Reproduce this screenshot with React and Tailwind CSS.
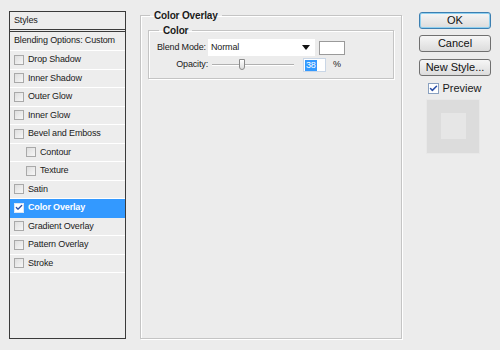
import { Check } from "lucide-react";

const font = { fontFamily: "'Liberation Sans', Arial, sans-serif" };

function Box({ checked, white }) {
  return (
    <span
      className={
        "flex h-[10px] w-[10px] shrink-0 items-center justify-center border " +
        (white ? "border-[#dbe6f5] bg-white" : "border-[#a9a9a9] bg-gradient-to-br from-[#dedede] to-[#f7f7f7]")
      }
    >
      {checked && <Check size={9} strokeWidth={4} className="text-[#2a4fa8]" />}
    </span>
  );
}

const items = [
  { label: "Drop Shadow" },
  { label: "Inner Shadow" },
  { label: "Outer Glow" },
  { label: "Inner Glow" },
  { label: "Bevel and Emboss" },
  { label: "Contour", sub: true },
  { label: "Texture", sub: true },
  { label: "Satin" },
  { label: "Color Overlay", active: true },
  { label: "Gradient Overlay" },
  { label: "Pattern Overlay" },
  { label: "Stroke" },
];

function Btn({ children, main }) {
  return (
    <button
      className={
        "h-[17px] w-[72px] rounded-[3px] border text-[11px] leading-none tracking-normal text-[#111] bg-gradient-to-b from-[#f6f6f6] to-[#dcdcdc] " +
        (main ? "border-[#3c7fb1] shadow-[inset_0_0_0_1px_#8fd0f0]" : "border-[#707070]")
      }
    >
      {children}
    </button>
  );
}

export default function App() {
  return (
    <div
      className="flex h-[350px] w-[500px] whitespace-nowrap bg-[#ececec] text-[9px] tracking-[-0.15px] text-[#1a1a1a]"
      style={font}
    >
      {/* Styles list */}
      <div className="ml-[9px] mt-[11px] flex h-[328px] w-[117px] flex-col border border-[#3a3a3a] bg-[#ededed]">
        <div className="flex h-[20px] items-center border-b-[3px] border-double border-[#3a3a3a] pl-[4px]">Styles</div>
        <div className="flex h-[19px] items-center border-b border-white pl-[4px]">Blending Options: Custom</div>
        {items.map((it) => (
          <div
            key={it.label}
            className={
              "flex h-[18.5px] items-center gap-[4px] border-b " +
              (it.sub ? "pl-[16px] " : "pl-[4px] ") +
              (it.active ? "border-[#3399ff] bg-[#3399ff] font-bold text-white" : "border-white")
            }
          >
            <Box checked={it.active} white={it.active} />
            <span>{it.label}</span>
          </div>
        ))}
      </div>

      {/* Main group */}
      <fieldset className="ml-[14px] mt-[8px] h-[331px] w-[262px] border border-[#c4c4c4] px-[7px] shadow-[inset_1px_1px_0_#fff,1px_1px_0_#fff]">
        <legend className="ml-[2px] px-[4px] text-[10px] font-bold">Color Overlay</legend>
        <fieldset className="mt-0 h-[56px] border border-[#c4c4c4] pl-[8px] shadow-[inset_1px_1px_0_#fff,1px_1px_0_#fff]">
          <legend className="ml-[2px] px-[4px] text-[10px] font-bold">Color</legend>
          <div className="mt-[1px] flex items-center">
            <span className="w-[51px]">Blend Mode:</span>
            <div className="flex h-[17px] w-[107px] items-center justify-between bg-white pl-[3px] pr-[5px]">
              <span>Normal</span>
              <span className="h-0 w-0 border-x-[4px] border-t-[5px] border-x-transparent border-t-[#111]" />
            </div>
            <div className="ml-[4px] h-[14px] w-[26px] border border-[#9a9a9a] bg-white" />
          </div>
          <div className="mt-[2px] flex items-center">
            <span className="w-[55px] pr-[4px] text-right">Opacity:</span>
            <div className="relative flex h-[14px] w-[82px] items-center">
              <div className="h-[2px] w-full border-t border-b border-[#b0b0b0] border-b-white" />
              <div className="absolute left-[27px] top-[1px] h-[11px] w-[6px] rounded-b-[3px] border border-[#8a8a8a] bg-gradient-to-b from-white to-[#dcdcdc]" />
            </div>
            <div className="ml-[9px] flex h-[14px] w-[23px] items-center border border-[#c9d6e6] bg-white pl-[1px]">
              <span className="bg-[#3399ff] px-[1px] leading-[11px] text-white">38</span>
            </div>
            <span className="ml-[7px]">%</span>
          </div>
        </fieldset>
      </fieldset>

      {/* Buttons */}
      <div className="ml-[17px] mt-[12px] flex w-[72px] flex-col items-center">
        <Btn main>OK</Btn>
        <div className="mt-[6px]">
          <Btn>Cancel</Btn>
        </div>
        <div className="mt-[7px]">
          <Btn>New Style...</Btn>
        </div>
        <div className="mt-[4px] flex items-center gap-[3px] text-[11px] tracking-normal">
          <span className="flex h-[11px] w-[11px] items-center justify-center border border-[#8aa1c0] bg-white">
            <Check size={9} strokeWidth={4} className="text-[#2a4fa8]" />
          </span>
          <span>Preview</span>
        </div>
        <div className="mt-[2px] -ml-[4px] flex h-[55px] w-[54px] items-center justify-center border border-[#e8e8e8] bg-[#dcdcdc]">
          <div className="h-[26px] w-[25px] bg-[#e6e6e6]" />
        </div>
      </div>
    </div>
  );
}
